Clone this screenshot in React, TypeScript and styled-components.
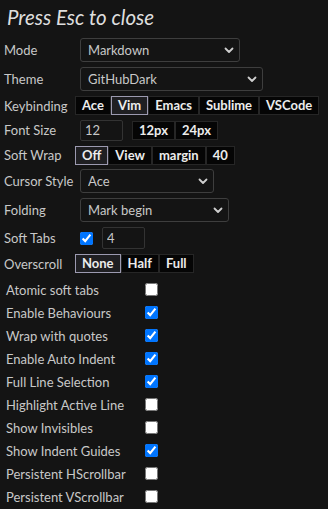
import React, { useState } from 'react';
import styled, { createGlobalStyle } from 'styled-components';

const GlobalStyle = createGlobalStyle`
  html, body {
    margin: 0;
    padding: 0;
    background: #141414;
  }
  body {
    font-family: "Lato", "Open Sans", sans-serif;
    color: #c8c8c8;
  }
`;

const modes = ['Markdown', 'JavaScript', 'HTML', 'CSS'];
const themes = ['GitHubDark', 'Monokai', 'Chrome', 'Dracula'];
const cursorStyles = ['Ace', 'Slim', 'Smooth', 'Wide'];
const foldings = ['Mark begin', 'Manual', 'Mark begin and end'];

const flags: { name: string; checked: boolean }[] = [
  { name: 'Atomic soft tabs', checked: false },
  { name: 'Enable Behaviours', checked: true },
  { name: 'Wrap with quotes', checked: true },
  { name: 'Enable Auto Indent', checked: true },
  { name: 'Full Line Selection', checked: true },
  { name: 'Highlight Active Line', checked: false },
  { name: 'Show Invisibles', checked: false },
  { name: 'Show Indent Guides', checked: true },
  { name: 'Persistent HScrollbar', checked: false },
  { name: 'Persistent VScrollbar', checked: false },
];

const Chevron = () => (
  <svg width="10" height="7" viewBox="0 0 10 7">
    <path d="M1.5 1.5 L5 5 L8.5 1.5" fill="none" stroke="#cfcfcf" strokeWidth="1.8" strokeLinecap="round" strokeLinejoin="round" />
  </svg>
);

const Dropdown: React.FC<{ options: string[]; value: string; width: number }> = ({ options, value, width }) => (
  <SelectWrap $w={width}>
    <Select defaultValue={value}>
      {options.map(o => <option key={o}>{o}</option>)}
    </Select>
    <Arrow><Chevron /></Arrow>
  </SelectWrap>
);

const ButtonGroup: React.FC<{ items: string[]; active?: string }> = ({ items, active }) => {
  const [current, setCurrent] = useState(active);
  return (
    <Group>
      {items.map(i => (
        <OptBtn key={i} $active={i === current} onClick={() => setCurrent(i)}>{i}</OptBtn>
      ))}
    </Group>
  );
};

const App: React.FC = () => {
  const [checks, setChecks] = useState(flags.map(f => f.checked));

  const toggle = (idx: number) => {
    setChecks(checks.map((c, i) => (i === idx ? !c : c)));
  };

  return (
    <Panel>
      <GlobalStyle />
      <Title>Press Esc to close</Title>

      <Row $h={29}>
        <Label>Mode</Label>
        <Dropdown options={modes} value="Markdown" width={160} />
      </Row>
      <Row $h={29}>
        <Label>Theme</Label>
        <Dropdown options={themes} value="GitHubDark" width={183} />
      </Row>
      <Row $h={24}>
        <Label>Keybinding</Label>
        <ButtonGroup items={['Ace', 'Vim', 'Emacs', 'Sublime', 'VSCode']} active="Vim" />
      </Row>
      <Row $h={25}>
        <Label>Font Size</Label>
        <NumInput defaultValue="12" />
        <Spacer />
        <ButtonGroup items={['12px', '24px']} />
      </Row>
      <Row $h={25}>
        <Label>Soft Wrap</Label>
        <ButtonGroup items={['Off', 'View', 'margin', '40']} active="Off" />
      </Row>
      <Row $h={27}>
        <Label>Cursor Style</Label>
        <Dropdown options={cursorStyles} value="Ace" width={134} />
      </Row>
      <Row $h={31}>
        <Label>Folding</Label>
        <Dropdown options={foldings} value="Mark begin" width={149} />
      </Row>
      <Row $h={25}>
        <Label>Soft Tabs</Label>
        <Check type="checkbox" defaultChecked />
        <NumInput defaultValue="4" $tall />
      </Row>
      <Row $h={26}>
        <Label>Overscroll</Label>
        <ButtonGroup items={['None', 'Half', 'Full']} active="None" />
      </Row>

      <FlagList>
        {flags.map((f, i) => (
          <FlagRow key={f.name}>
            <FlagLabel>{f.name}</FlagLabel>
            <FlagCheck type="checkbox" checked={checks[i]} onChange={() => toggle(i)} />
          </FlagRow>
        ))}
      </FlagList>
    </Panel>
  );
};

export default App;

//#region styled-components
const Panel = styled.div`
  width: 328px;
  height: 509px;
  overflow: hidden;
  background: #141414;
  font-size: 13px;
`;

const Title = styled.div`
  height: 35.5px;
  box-sizing: border-box;
  padding: 4px 0 0 7px;
  font-size: 20.5px;
  font-style: italic;
  color: #dedede;
  line-height: 26px;
`;

const Row = styled.div<{ $h: number }>`
  display: flex;
  align-items: center;
  height: ${p => p.$h}px;
`;

const Label = styled.div`
  width: 71px;
  padding-left: 4px;
  flex: none;
  color: #c8c8c8;
  white-space: nowrap;
`;

const SelectWrap = styled.div<{ $w: number }>`
  position: relative;
  margin-left: 5px;
  width: ${p => p.$w}px;
  height: 24px;
`;

const Select = styled.select`
  appearance: none;
  width: 100%;
  height: 100%;
  box-sizing: border-box;
  background: #141414;
  border: 1px solid #3e3e3e;
  border-radius: 3px;
  color: #c8c8c8;
  font-family: inherit;
  font-size: 13px;
  padding: 0 0 0 7px;
  outline: none;
`;

const Arrow = styled.span`
  position: absolute;
  right: 6px;
  top: 9px;
  line-height: 0;
  pointer-events: none;
`;

const Group = styled.div`
  display: flex;
`;

const OptBtn = styled.button<{ $active?: boolean }>`
  height: 19px;
  box-sizing: border-box;
  padding: 0 6px;
  background: ${p => (p.$active ? '#1f1f22' : '#050505')};
  border: 1px solid ${p => (p.$active ? '#9c9ab0' : '#262626')};
  color: #ececec;
  font-family: inherit;
  font-weight: bold;
  font-size: 13px;
  line-height: 17px;
  cursor: pointer;
  margin: 0;
`;

const NumInput = styled.input<{ $tall?: boolean }>`
  width: 43px;
  height: ${p => (p.$tall ? 22 : 21)}px;
  box-sizing: border-box;
  margin-left: ${p => (p.$tall ? 9 : 5)}px;
  background: #141414;
  border: 1px solid #333;
  border-radius: 2px;
  color: #c8c8c8;
  font-family: inherit;
  font-size: 13px;
  padding: 0 0 0 4px;
  outline: none;
`;

const Spacer = styled.div`
  width: 9px;
`;

const Check = styled.input`
  width: 13px;
  height: 13px;
  margin: 0 0 0 5px;
`;

const FlagList = styled.div`
  margin-top: 1.5px;
`;

const FlagRow = styled.div`
  display: flex;
  align-items: center;
  height: 23px;
`;

const FlagLabel = styled.div`
  width: 139px;
  padding-left: 6px;
  color: #c8c8c8;
  white-space: nowrap;
`;

const FlagCheck = styled.input`
  width: 13px;
  height: 13px;
  margin: 0;
`;
//#endregion
